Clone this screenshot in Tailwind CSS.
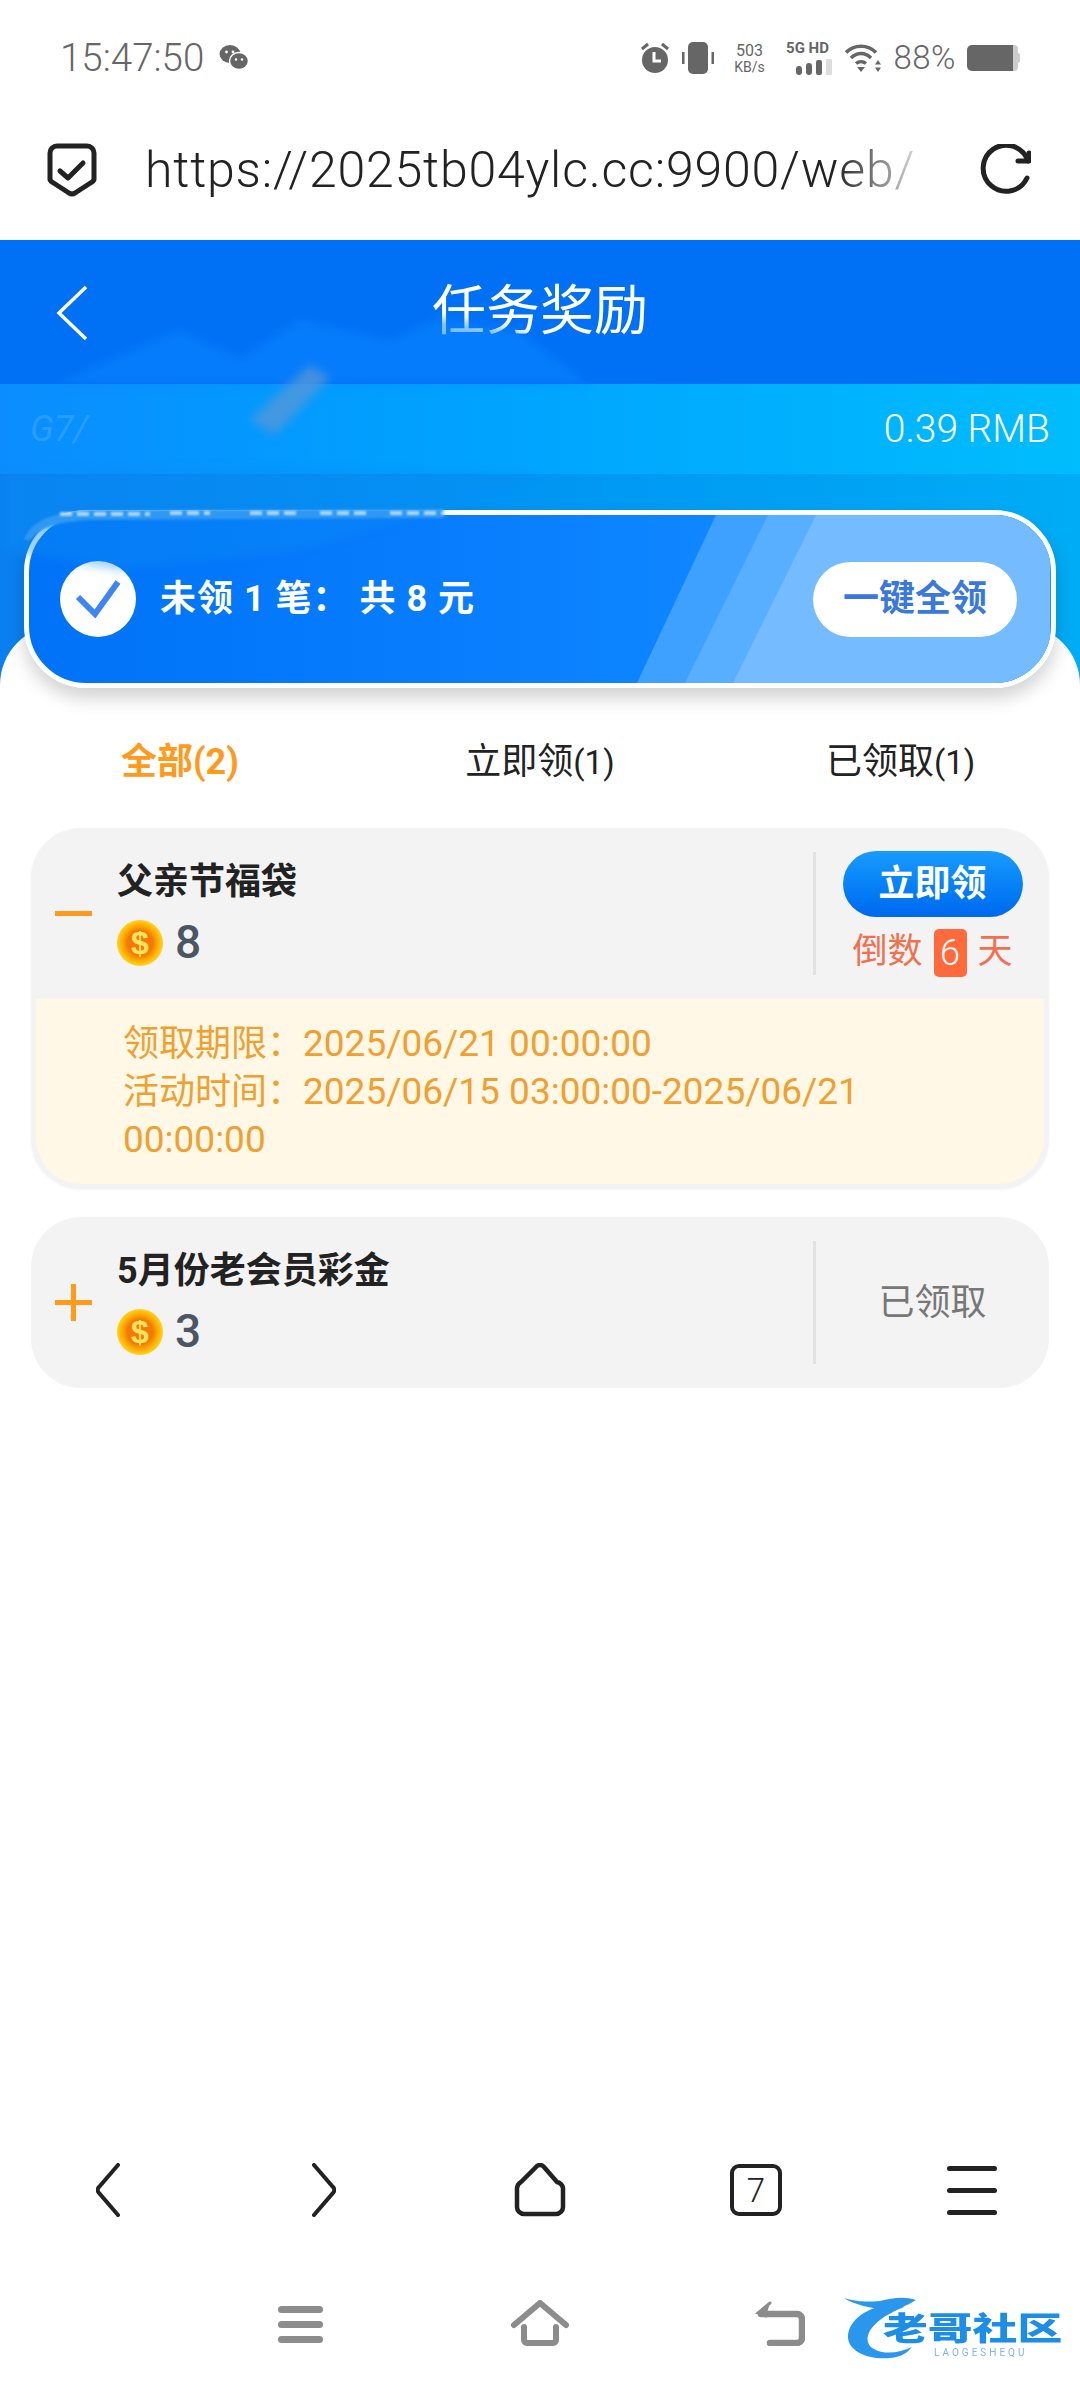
<!doctype html>
<html lang="zh-CN">
<head>
<meta charset="UTF-8" />
<meta name="viewport" content="width=device-width, initial-scale=1.0" />
<title>任务奖励</title>
<script src="https://cdn.jsdelivr.net/npm/@tailwindcss/browser@4"></script>
</head>
<body class="bg-white">
<div class="relative w-[1080px] h-[2388px] overflow-hidden flex flex-col bg-white font-['Roboto','Noto_Sans_CJK_SC',sans-serif]">

  <!-- status bar -->
  <div class="h-[80px] shrink-0 pl-[60px] pr-[60px] pt-[38px] flex items-start justify-between text-[#666]">
    <div class="flex items-center h-[40px]">
      <span class="text-[38.5px] leading-[40px] font-light">15:47:50</span>
      <svg class="ml-[15px]" width="30" height="28" viewBox="0 0 30 28" fill="#666"><ellipse cx="11" cy="10" rx="10.5" ry="9"/><ellipse cx="20" cy="17" rx="9.5" ry="8.5" stroke="#fff" stroke-width="1.5"/><circle cx="7.500" cy="8" r="1.400" fill="#fff"/><circle cx="14" cy="8" r="1.400" fill="#fff"/><circle cx="17" cy="15.500" r="1.200" fill="#fff"/><circle cx="23" cy="15.500" r="1.200" fill="#fff"/></svg>
    </div>
    <div class="flex items-center h-[40px]">
      <svg width="30" height="32" viewBox="0 0 30 32" fill="#666"><circle cx="15" cy="18" r="13"/><path d="M2 7l6-5M28 7l-6-5" stroke="#666" stroke-width="3"/><path d="M14 10v9h7" stroke="#fff" stroke-width="3" fill="none"/></svg>
      <svg class="ml-[9px]" width="38" height="32" viewBox="0 0 38 32" fill="#666"><rect x="9" y="0" width="20" height="32" rx="5"/><rect x="3" y="10" width="2.500" height="12"/><rect x="32.500" y="10" width="2.500" height="12"/></svg>
      <div class="ml-[14px] w-[36px] flex flex-col items-center text-[16px] leading-[16px] pt-[2px]"><span>503</span><span class="text-[14px]">KB/s</span></div>
      <div class="ml-[15px] w-[50px] flex flex-col items-end">
        <span class="text-[15px] leading-[15px] font-bold w-full text-center whitespace-nowrap">5G HD</span>
        <svg class="mt-[3px]" width="36" height="16" viewBox="0 0 36 16"><rect x="0" y="7" width="6" height="9" rx="3" fill="#666"/><rect x="10" y="4" width="6" height="12" rx="3" fill="#666"/><rect x="20" y="1" width="6" height="15" rx="2" fill="#666"/><rect x="30" y="0" width="6" height="16" rx="1" fill="#ddd"/></svg>
      </div>
      <svg class="ml-[13px]" width="37" height="30" viewBox="0 0 37 30" fill="none"><path d="M1 9.500C9 1 23 1 31 9.500" stroke="#666" stroke-width="3.500"/><path d="M6 15C12 9 20 9 26 15" stroke="#666" stroke-width="3.500"/><path d="M11 20.500C14 18 18 18 21 20.500" stroke="#666" stroke-width="3.500"/><path d="M12 24h8l-4 5z" fill="#666"/><path d="M33 17l3 4.500h-6zM33 29l3-4.500h-6z" fill="#666"/></svg>
      <span class="ml-[11px] text-[33px] font-light leading-[40px] tracking-[0.5px]">88%</span>
      <div class="ml-[11px] w-[53px] h-[26px] flex items-center">
        <div class="w-[46px] h-[26px] bg-[#666] rounded-l-[5px]"></div>
        <div class="w-[5px] h-[26px] bg-[#ccc] rounded-r-[4px]"></div>
        <div class="w-[2px] h-[10px] bg-[#ccc] rounded-r-[2px]"></div>
      </div>
    </div>
  </div>

  <!-- url bar -->
  <div class="h-[160px] shrink-0 flex items-center pl-[47px] pr-[49px] pt-[20px]">
    <svg width="50" height="54" viewBox="0 0 50 54" fill="none" stroke="#222" stroke-width="5" stroke-linecap="round" stroke-linejoin="round"><path d="M10 3H40a7 7 0 0 1 7 7V35a4 4 0 0 1-2 4L28 50a6 6 0 0 1-6 0L5 39a4 4 0 0 1-2-4V10a7 7 0 0 1 7-7z"/><path d="M13 28l8 7 15-15"/></svg>
    <div class="relative ml-[48px] w-[790px] overflow-hidden">
      <span class="block whitespace-nowrap text-[50px] leading-[62px] tracking-[0.8px] font-light text-[#222]">https://2025tb04ylc.cc:9900/web/</span>
      <div class="absolute inset-y-0 right-0 w-[100px] bg-gradient-to-r from-white/0 to-white"></div>
    </div>
    <svg class="ml-auto" width="52" height="52" viewBox="0 0 52 52" fill="none" stroke="#222" stroke-width="5" stroke-linecap="round" stroke-linejoin="round"><path d="M48 34A23 23 0 1 1 49 17"/><path d="M50 9V17H39"/></svg>
  </div>

  <!-- header -->
  <div class="relative h-[144px] shrink-0 bg-[#0070f5] flex items-center justify-center">
    <svg class="absolute left-[55px] top-[45px]" width="36" height="56" viewBox="0 0 36 56" fill="none" stroke="#fff" stroke-width="3.500"><path d="M31 2L4 28l27 26"/></svg>
    <span class="text-[54px] leading-[60px] text-white">任务奖励</span>
  </div>

  <!-- account strip -->
  <div class="h-[90px] shrink-0 bg-gradient-to-r from-[#0b8dff] to-[#00bdfd] flex items-center justify-between pl-[30px] pr-[30px]">
    <span class="text-[36px] text-white/15 italic">G7/</span>
    <span class="text-[39px] text-white font-light">0.39 RMB</span>
  </div>

  <!-- summary -->
  <div class="h-[211px] shrink-0 bg-gradient-to-r from-[#0a7ff0] to-[#00acf5] px-[24px] pt-[36px]">
    <div class="relative z-10 h-[178px] rounded-[62px] border-[5px] border-white bg-gradient-to-r from-[#0072f7] via-[#0a80ff] to-[#1a94ff] overflow-hidden shadow-[0_10px_18px_rgba(0,0,0,0.18)] flex items-center pl-[31px] pr-[34px]">
      <svg class="absolute inset-0" width="1021" height="168" viewBox="0 0 1021 168"><polygon points="687,0 1021,0 1021,168 608,168" fill="#3fa1ff"/><polygon points="739,0 1021,0 1021,168 656,168" fill="#58aeff"/><polygon points="787,0 1021,0 1021,168 704,168" fill="#74bcff"/></svg>
      <div class="relative w-[76px] h-[76px] rounded-full bg-white flex items-center justify-center">
        <svg width="46" height="40" viewBox="0 0 46 40" fill="none" stroke="#3d85f5" stroke-width="6"><path d="M3 18l17 17L43 3"/></svg>
      </div>
      <span class="relative ml-[24px] text-[36px] font-bold text-white tracking-[1px] whitespace-pre">未领 1 笔： 共 8 元</span>
      <div class="relative ml-auto w-[204px] h-[75px] rounded-full bg-white flex items-center justify-center text-[36px] font-bold text-[#3a78dd]">一键全领</div>
    </div>
  </div>

  <!-- redacted smear -->
  <svg class="absolute left-0 top-[310px] z-20 blur-[5px]" width="720" height="290" viewBox="0 0 720 290">
    <path d="M55 74L120 45L180 20L240 48L300 10L390 30L440 8L520 22L590 74z" fill="#0a86ff" opacity="0.55"/>
    <path d="M250 110L310 55L330 68L275 125z" fill="#5a97d8" opacity="0.75"/>
    <path d="M0 164L200 158L540 164L470 190L300 240L120 260L0 240z" fill="#0a8df5" opacity="0.4"/>
  </svg>
  <svg class="absolute left-0 top-[500px] z-20 blur-[1px]" width="460" height="40" viewBox="0 0 460 40">
    <path d="M24 40C30 22 50 12 90 10L444 9V18L90 20C60 22 42 26 30 40z" fill="#2f98f3"/>
    <path d="M60 14H150M170 13H210M250 13H300M320 13H370M390 13H444" stroke="#cfe6ff" stroke-width="4" stroke-dasharray="12 5" opacity="0.8"/>
  </svg>

  <!-- content -->
  <div class="relative -mt-[60px] flex-1 bg-white rounded-t-[60px]">
    <div class="relative h-[203px] pt-[113px]">
      <div class="absolute left-[121px] top-[113px] text-[36px] leading-[48px] font-bold text-[#ff9a1c]">全部(2)</div>
      <div class="w-full text-center text-[36px] leading-[48px] text-[#222]">立即领<span class="text-[33px]">(1)</span></div>
      <div class="absolute left-[826px] top-[113px] text-[36px] leading-[48px] text-[#222]">已领取<span class="text-[33px]">(1)</span></div>
    </div>
    <div class="px-[31px] flex flex-col gap-[28px]">
      <!-- open item -->
      <div class="rounded-[50px] bg-[#f3f3f3] pb-[5px] px-[5px] shadow-[0_1px_3px_rgba(0,0,0,0.04)]">
        <div class="h-[171px] flex items-center -mx-[5px]">
          <div class="w-[86px] flex justify-center pr-[2px]"><div class="w-[37px] h-[5px] bg-[#ff9a1c]"></div></div>
          <div class="flex-1 -mt-[4px]">
            <div class="text-[36px] leading-[48px] font-bold text-[#222]">父亲节福袋</div>
            <div class="flex items-center mt-[14px] h-[46px]">
              <svg width="46" height="46" viewBox="0 0 46 46"><defs><radialGradient id="c1"><stop offset="0.55" stop-color="#f37a08"/><stop offset="0.8" stop-color="#ffb300"/><stop offset="1" stop-color="#ffd21f"/></radialGradient></defs><circle cx="23" cy="23" r="23" fill="url(#c1)"/><text x="23" y="34" text-anchor="middle" font-family="Liberation Sans" font-size="32" font-weight="700" fill="#ffe55c">$</text></svg>
              <span class="ml-[12px] text-[46px] font-medium text-[#4b5563]">8</span>
            </div>
          </div>
          <div class="w-[3px] h-[123px] bg-[#e2e2e2]"></div>
          <div class="w-[233px] flex flex-col items-center">
            <div class="w-[180px] h-[66px] rounded-full bg-gradient-to-b from-[#1a9bff] to-[#0068ee] flex items-center justify-center text-[36px] font-bold text-white">立即领</div>
            <div class="mt-[12px] flex items-center h-[48px] text-[35px] text-[#f1704f]">
              <span>倒数</span>
              <span class="mx-[11px] w-[33px] h-[48px] rounded-[5px] bg-[#ff6a3d] text-white flex items-center justify-center text-[36px] font-light">6</span>
              <span>天</span>
            </div>
          </div>
        </div>
        <div class="rounded-b-[46px] bg-[#fff8e6] pl-[87px] pr-[80px] pt-[21px] pb-[20px] text-[36px] leading-[48px] text-[#f0a030]">
          <div>领取期限：<span class="text-[37px]">2025/06/21 00:00:00</span></div>
          <div>活动时间：<span class="text-[37px]">2025/06/15 03:00:00-2025/06/21 00:00:00</span></div>
        </div>
      </div>
      <!-- collapsed item -->
      <div class="h-[171px] rounded-[50px] bg-[#f3f3f3] flex items-center">
        <div class="w-[86px] flex justify-center pr-[2px]">
          <svg width="37" height="37" viewBox="0 0 37 37" fill="#ff9a1c"><rect x="0" y="16" width="37" height="5"/><rect x="16" y="0" width="5" height="37"/></svg>
        </div>
        <div class="flex-1 -mt-[4px]">
          <div class="text-[36px] leading-[48px] font-bold text-[#222]">5月份老会员彩金</div>
          <div class="flex items-center mt-[14px] h-[46px]">
            <svg width="46" height="46" viewBox="0 0 46 46"><circle cx="23" cy="23" r="23" fill="url(#c1)"/><text x="23" y="34" text-anchor="middle" font-family="Liberation Sans" font-size="32" font-weight="700" fill="#ffe55c">$</text></svg>
            <span class="ml-[12px] text-[46px] font-medium text-[#4b5563]">3</span>
          </div>
        </div>
        <div class="w-[3px] h-[123px] bg-[#e2e2e2]"></div>
        <div class="w-[233px] text-center text-[36px] text-[#777]">已领取</div>
      </div>
    </div>
  </div>

  <!-- browser nav -->
  <div class="h-[100px] shrink-0 grid grid-cols-5 place-items-center text-[#222]">
    <svg width="24" height="54" viewBox="0 0 24 54" fill="none" stroke="#222" stroke-width="4" stroke-linecap="round"><path d="M22 2L3 24a4 4 0 0 0 0 6l19 22"/></svg>
    <svg width="24" height="54" viewBox="0 0 24 54" fill="none" stroke="#222" stroke-width="4" stroke-linecap="round"><path d="M2 2l19 22a4 4 0 0 1 0 6L2 52"/></svg>
    <svg width="52" height="54" viewBox="0 0 52 54" fill="none" stroke="#222" stroke-width="4.500"><path d="M22 4a5 5 0 0 1 8 0l13 15a8 8 0 0 1 6 6v19a7 7 0 0 1-7 7H10a7 7 0 0 1-7-7V25a8 8 0 0 1 4-6z"/></svg>
    <div class="w-[52px] h-[52px] rounded-[9px] border-[4.5px] border-[#222] flex items-center justify-center text-[33px] leading-none font-light">7</div>
    <div class="w-[50px] flex flex-col gap-[17px]"><div class="h-[5px] bg-[#222] rounded-full"></div><div class="h-[5px] bg-[#222] rounded-full"></div><div class="h-[5px] bg-[#222] rounded-full"></div></div>
  </div>

  <!-- system gesture bar -->
  <div class="h-[148px] shrink-0 flex justify-center pt-[66px]">
    <div class="w-[240px] flex justify-center">
      <div class="w-[45px] h-[37px] flex flex-col justify-between"><div class="h-[7px] bg-[#8c8c8c] rounded-full"></div><div class="h-[7px] bg-[#8c8c8c] rounded-full"></div><div class="h-[7px] bg-[#8c8c8c] rounded-full"></div></div>
    </div>
    <div class="w-[240px] flex justify-center -mt-[6px]">
      <svg width="58" height="46" viewBox="0 0 58 46" fill="none" stroke="#8c8c8c" stroke-width="6" stroke-linecap="round"><path d="M3 25L29 3l26 22"/><path d="M13 27v13a3 3 0 0 0 3 3h26a3 3 0 0 0 3-3V27"/></svg>
    </div>
    <div class="w-[240px] flex justify-center -mt-[6px]">
      <svg width="50" height="46" viewBox="0 0 50 46" fill="none" stroke="#8c8c8c" stroke-width="6.500" stroke-linecap="round"><path d="M6 14h36a5 5 0 0 1 5 5v19a5 5 0 0 1-5 5H15"/><path d="M15 3L3 13l8 3" fill="#8c8c8c" stroke-width="3"/></svg>
    </div>
  </div>

  <!-- watermark logo -->
  <div class="absolute left-[842px] top-[2293px] w-[222px] h-[68px]">
    <svg class="absolute inset-0 blur-[0.6px]" width="222" height="68" viewBox="0 0 222 68" fill="none"><path d="M58 10C24 12 6 28 6 44c0 14 20 23 42 21 12-1 18-6 22-11-12 6-28 8-38 2C20 50 22 30 62 14z" fill="#2b97ec"/><path d="M2 5c14 4 22 4 36 3 12-3 24-5 36-1-10 6-20 11-30 10C30 15 12 12 2 5z" fill="#2b97ec"/></svg>
    <span class="absolute left-[41px] top-[18px] text-[32px] leading-[36px] font-black whitespace-nowrap origin-left scale-x-[1.4] text-[#1c8ee8] blur-[0.5px]">老哥社区</span>
    <span class="absolute left-[92px] top-[54px] text-[10px] leading-[12px] tracking-[3px] text-[#7fb6e6] blur-[0.3px]">LAOGESHEQU</span>
  </div>
</div>
</body>
</html>
